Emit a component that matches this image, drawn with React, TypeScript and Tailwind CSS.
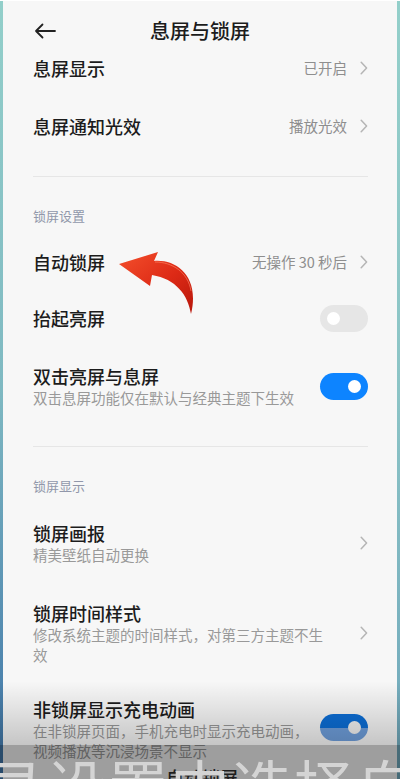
import React from "react";

const FONT = { fontFamily: '"Noto Sans CJK SC", "Noto Sans", sans-serif' };

function Chevron() {
  return (
    <svg width="8" height="14" viewBox="0 0 8 14" className="shrink-0">
      <path d="M1.2 1.2 L6.6 7 L1.2 12.8" fill="none" stroke="#b5b5b5" strokeWidth="1.5" strokeLinecap="round" strokeLinejoin="round" />
    </svg>
  );
}

function Toggle({ on }: { on: boolean }) {
  return on ? (
    <div className="w-[48px] h-[27px] rounded-full bg-[#0d84ff] flex items-center justify-end pr-[7px] shrink-0">
      <div className="w-[13px] h-[13px] rounded-full bg-white" />
    </div>
  ) : (
    <div className="w-[48px] h-[27px] rounded-full bg-[#e6e6e6] flex items-center justify-start pl-[7px] shrink-0">
      <div className="w-[13px] h-[13px] rounded-full bg-white" />
    </div>
  );
}

function ValueRow({ title, value, h }: { title: string; value: string; h: string }) {
  return (
    <div className={`flex items-center justify-between pl-[30px] pr-[29px] ${h}`}>
      <span className="text-[18px] font-medium text-[#1c1c1c] leading-[24px]">{title}</span>
      <div className="flex items-center gap-[13px]">
        <span className="text-[14.5px] text-[#8e8e8e] leading-[20px]">{value}</span>
        <Chevron />
      </div>
    </div>
  );
}

function SectionHeader({ title }: { title: string }) {
  return (
    <div className="pl-[30px] pt-[30px] pb-[8px]">
      <div className="text-[13px] leading-[18px] text-[#9197aa]">{title}</div>
    </div>
  );
}

function Divider({ pt }: { pt: string }) {
  return (
    <div className={`pl-[30px] pr-[29px] ${pt}`}>
      <div className="h-px bg-[#e6e6e6]" />
    </div>
  );
}

export default function App() {
  return (
    <div className="w-[400px] h-[779px] overflow-hidden relative flex bg-[#f7f7f7] border-t border-white" style={FONT}>
      <div className="w-[3px] shrink-0 bg-gradient-to-b from-[#93cfca] via-[#7fb9c2] to-[#3d72a6]" />
      <div className="flex-1 flex flex-col min-w-0">
        {/* Header */}
        <div className="h-[59px] shrink-0 grid grid-cols-[1fr_auto_1fr] items-start pt-[16px] relative z-10 bg-[#f7f7f7]">
          <div className="pl-[31px] flex items-center h-[28px]">
            <svg width="22" height="16" viewBox="0 0 22 16">
              <path d="M21 8 H2 M8.5 1.5 L2 8 L8.5 14.5" fill="none" stroke="#222" strokeWidth="1.8" strokeLinecap="round" strokeLinejoin="round" />
            </svg>
          </div>
          <div className="text-[20px] font-medium text-[#1c1c1c] leading-[28px]">息屏与锁屏</div>
          <div />
        </div>
        {/* List */}
        <div className="flex-1 flex flex-col overflow-hidden">
          <div className="-mt-[21px] flex flex-col">
            <ValueRow title="息屏显示" value="已开启" h="h-[58px]" />
            <ValueRow title="息屏通知光效" value="播放光效" h="h-[58px]" />
          </div>
          <Divider pt="pt-[21px]" />
          <SectionHeader title="锁屏设置" />
          <ValueRow title="自动锁屏" value="无操作 30 秒后" h="h-[60px]" />
          <div className="flex items-center justify-between pl-[30px] pr-[29px] h-[58px]">
            <span className="text-[18px] font-medium text-[#1c1c1c] leading-[24px]">抬起亮屏</span>
            <Toggle on={false} />
          </div>
          <div className="flex items-center justify-between pl-[30px] pr-[29px] pt-[18px] pb-[18px]">
            <div className="flex flex-col">
              <span className="text-[18px] font-medium text-[#1c1c1c] leading-[24px]">双击亮屏与息屏</span>
              <span className="text-[14.5px] text-[#999] leading-[20px]">双击息屏功能仅在默认与经典主题下生效</span>
            </div>
            <Toggle on={true} />
          </div>
          <Divider pt="pt-[20px]" />
          <SectionHeader title="锁屏显示" />
          <div className="flex items-center justify-between pl-[30px] pr-[29px] pt-[18px] pb-[18px]">
            <div className="flex flex-col">
              <span className="text-[18px] font-medium text-[#1c1c1c] leading-[24px]">锁屏画报</span>
              <span className="text-[14.5px] text-[#999] leading-[20px]">精美壁纸自动更换</span>
            </div>
            <Chevron />
          </div>
          <div className="flex items-center justify-between pl-[30px] pr-[29px] pt-[18px] pb-[18px]">
            <div className="flex flex-col w-[292px]">
              <span className="text-[18px] font-medium text-[#1c1c1c] leading-[24px]">锁屏时间样式</span>
              <span className="text-[14.5px] text-[#999] leading-[20px]">修改系统主题的时间样式，对第三方主题不生效</span>
            </div>
            <Chevron />
          </div>
          <div className="flex items-start justify-between pl-[30px] pr-[29px] pt-[14px] pb-[18px]">
            <div className="flex flex-col w-[283px]">
              <span className="text-[18px] font-medium text-[#1c1c1c] leading-[24px]">非锁屏显示充电动画</span>
              <span className="text-[14.5px] text-[#999] leading-[20px]">在非锁屏页面，手机充电时显示充电动画，视频播放等沉浸场景不显示</span>
            </div>
            <div className="mt-[17px] w-[48px] h-[27px] rounded-full bg-[linear-gradient(to_bottom,#0c6ed6_52%,#6f9fdc_52%)] flex items-center justify-end pr-[7px] shrink-0">
              <div className="w-[13px] h-[13px] rounded-full bg-[#f2f2f2]" />
            </div>
          </div>
        </div>
      </div>
      <div className="w-[3px] shrink-0 bg-gradient-to-b from-[#93cfca] via-[#8cc4c6] to-[#6fa7bb]" />

      {/* Red arrow annotation */}
      <svg className="absolute left-[100px] top-[240px]" width="100" height="80" viewBox="0 0 100 80">
        <defs>
          <linearGradient id="ar" x1="0" y1="0" x2="1" y2="1">
            <stop offset="0" stopColor="#f4502c" />
            <stop offset="0.55" stopColor="#dd2a16" />
            <stop offset="1" stopColor="#b8170b" />
          </linearGradient>
        </defs>
        <path d="M19 23 L58 11 L54 20 C77 18 100 36 91 73 C88 54 76 38 52 34 L50 45 Z" fill="url(#ar)" />
        <path d="M55 21 C72 21 88 31 91 50" fill="none" stroke="#ff8a6a" strokeWidth="1" opacity="0.6" />
      </svg>

      {/* Video overlay */}
      <div className="absolute left-0 right-0 top-[680px] h-[64px] bg-gradient-to-b from-[rgba(0,0,0,0)] to-[rgba(0,0,0,0.2)]" />
      <div className="absolute left-0 right-0 top-[744px] h-[35px] bg-[rgba(0,0,0,0.36)]" />
      <div className="absolute left-[166px] top-[764px] text-[18px] font-medium leading-[24px] text-[#1e1e1e] whitespace-nowrap">自动锁屏</div>
      <div className="absolute left-[-16px] top-[749px] text-[60px] leading-[70px] tracking-[2px] text-[#d4d4d4] whitespace-nowrap">录设置中选择自</div>
    </div>
  );
}
